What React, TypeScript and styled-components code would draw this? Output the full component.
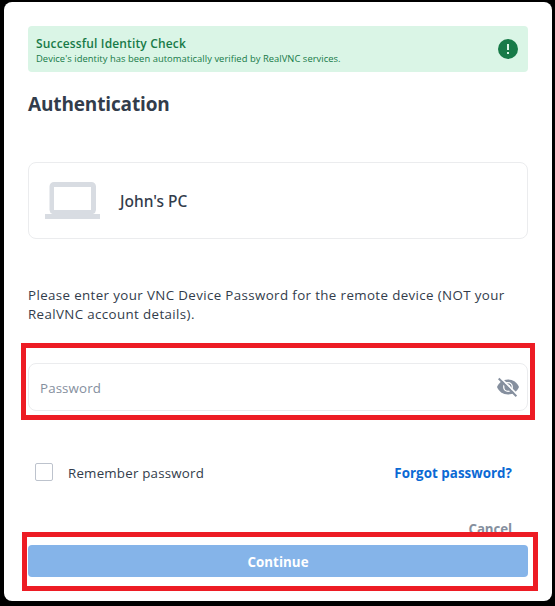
import React from 'react';
import styled, { createGlobalStyle } from 'styled-components';

const GlobalStyle = createGlobalStyle`
  * { box-sizing: border-box; }
  body {
    margin: 0;
    background: #000;
    color: #323c4b;
    font-family: "Open Sans", "Noto Sans", sans-serif;
  }
`;

const Dialog = styled.main`
  width: 548px;
  height: 599px;
  margin: 2px 0 0 4px;
  padding: 24px 24px 0;
  display: flex;
  flex-direction: column;
  background: #fff;
  border-radius: 8px;
`;

const Banner = styled.section`
  height: 46px;
  flex: none;
  padding: 0 10px 0 8px;
  display: flex;
  align-items: center;
  justify-content: space-between;
  border-radius: 4px;
  background: #daf5e6;
  color: #177a48;
`;

const BannerTitle = styled.div`
  margin-top: 4px;
  font-size: 12px;
  line-height: 15px;
  font-weight: 600;
  letter-spacing: 0.15px;
`;

const BannerText = styled.div`
  font-size: 9.4px;
  line-height: 15px;
  letter-spacing: 0.045px;
`;

const Heading = styled.h1`
  margin: 18px 0 0;
  font-size: 19px;
  line-height: 28px;
  font-weight: 700;
  letter-spacing: -0.14px;
`;

const DeviceCard = styled.section`
  height: 77px;
  flex: none;
  margin-top: 44px;
  padding-left: 16px;
  display: flex;
  align-items: center;
  gap: 20px;
  border: 1px solid #ebecee;
  border-radius: 8px;
`;

const DeviceName = styled.div`
  font-family: "Noto Sans", sans-serif;
  font-size: 15.5px;
  line-height: 20px;
  font-weight: 500;
`;

const Prompt = styled.p`
  height: 38px;
  margin: 47px 0 0;
  font-size: 13.33px;
  line-height: 19px;
  letter-spacing: 0.375px;
  white-space: nowrap;
`;

const Highlight = styled.div<{ $kind: 'field' | 'button' }>`
  flex: none;
  position: relative;
  border: 5px solid #ed1c24;
  ${({ $kind }) =>
    $kind === 'field'
      ? 'margin: 19px -7px 0; height: 77px; padding: 15px 2px 0;'
      : 'margin: -7px -10px 0 -6px; height: 59px; padding: 8px 5px 0 1px; background: #fff;'}
`;

const PasswordField = styled.div`
  height: 48px;
  padding: 0 7px 0 11px;
  display: flex;
  align-items: center;
  border: 1px solid #ebecee;
  border-radius: 8px;
`;

const PasswordInput = styled.input`
  flex: 1;
  min-width: 0;
  padding: 2px 0 0;
  border: 0;
  outline: 0;
  background: transparent;
  font: 400 13.33px/20px "Open Sans", sans-serif;
  letter-spacing: 0.11px;
  &::placeholder { color: #858f9e; opacity: 1; }
`;

const IconButton = styled.button`
  width: 24px;
  height: 24px;
  padding: 0;
  border: 0;
  background: none;
  color: #858f9e;
  svg { display: block; }
`;

const Options = styled.div`
  height: 24px;
  margin-top: 40px;
  padding: 0 16px 0 7px;
  display: flex;
  align-items: center;
  justify-content: space-between;
`;

const RememberLabel = styled.label`
  display: flex;
  align-items: center;
  gap: 15px;
  font-size: 13.33px;
  line-height: 20px;
  letter-spacing: 0.2px;
`;

const Checkbox = styled.input`
  appearance: none;
  width: 18px;
  height: 18px;
  margin: 0;
  border: 1px solid #bdc3cd;
  border-radius: 2px;
  background: #fff;
`;

const LabelText = styled.span`
  padding-top: 2px;
`;

const ForgotLink = styled.a`
  padding-top: 2px;
  color: #0b69d4;
  font-size: 13.33px;
  line-height: 20px;
  font-weight: 700;
  letter-spacing: 0.05px;
  text-decoration: none;
`;

const CancelButton = styled.button`
  align-self: flex-end;
  height: 20px;
  margin: 35px 16px 0 0;
  padding: 0;
  border: 0;
  background: none;
  color: #858f9e;
  font: 700 13.33px/20px "Open Sans", sans-serif;
  letter-spacing: -0.1px;
`;

const ContinueButton = styled.button`
  width: 100%;
  height: 32px;
  padding: 2px 0 0;
  display: block;
  border: 0;
  border-radius: 4px;
  background: #85b4e9;
  color: #fff;
  font: 700 13.33px/20px "Open Sans", sans-serif;
  letter-spacing: 0.06px;
`;

const AlertIcon = () => (
  <svg width="20" height="20" viewBox="0 0 20 20" aria-hidden="true">
    <circle cx="10" cy="10" r="10" fill="#177a48" />
    <path d="M9 5h2v6H9zM9 13h2v2H9z" fill="#daf5e6" />
  </svg>
);

const LaptopIcon = () => (
  <svg width="55" height="37" viewBox="0 0 55 37" fill="#d8dce2" aria-hidden="true">
    <path
      fillRule="evenodd"
      d="M9 0h37.500a4.500 4.500 0 0 1 4.500 4.500V28a4.500 4.500 0 0 1-3 4h7v5H0v-5h7.500a4.500 4.500 0 0 1-3-4V4.500A4.500 4.500 0 0 1 9 0zm0 5v23h37V5z"
    />
  </svg>
);

const EyeOffIcon = () => (
  <svg width="24" height="24" viewBox="0 0 24 24" fill="none" aria-hidden="true">
    <path
      d="M12 4.500C7 4.500 2.700 7.600 1 12c1.700 4.400 6 7.500 11 7.500s9.300-3.100 11-7.500c-1.700-4.400-6-7.500-11-7.500z"
      fill="currentColor"
    />
    <circle cx="12" cy="12" r="4.300" stroke="#fff" strokeWidth="1.300" />
    <path d="M12.300 10.200a1.800 1.800 0 0 1 1.500 1.500" stroke="#fff" strokeWidth="1.200" />
    <path d="M3.900 2.100 21.900 20.100" stroke="#fff" strokeWidth="1.800" />
    <path d="M2.700 3.500 20.400 21.300" stroke="currentColor" strokeWidth="2" />
  </svg>
);

export default function App() {
  return (
    <>
      <GlobalStyle />
      <Dialog>
        <Banner>
          <div>
            <BannerTitle>Successful Identity Check</BannerTitle>
            <BannerText>Device's identity has been automatically verified by RealVNC services.</BannerText>
          </div>
          <AlertIcon />
        </Banner>
        <Heading>Authentication</Heading>
        <DeviceCard>
          <LaptopIcon />
          <DeviceName>John's PC</DeviceName>
        </DeviceCard>
        <Prompt>
          Please enter your VNC Device Password for the remote device (NOT your
          <br />
          RealVNC account details).
        </Prompt>
        <Highlight $kind="field">
          <PasswordField>
            <PasswordInput type="password" placeholder="Password" />
            <IconButton type="button" aria-label="Show password">
              <EyeOffIcon />
            </IconButton>
          </PasswordField>
        </Highlight>
        <Options>
          <RememberLabel>
            <Checkbox type="checkbox" />
            <LabelText>Remember password</LabelText>
          </RememberLabel>
          <ForgotLink href="#">Forgot password?</ForgotLink>
        </Options>
        <CancelButton type="button">Cancel</CancelButton>
        <Highlight $kind="button">
          <ContinueButton type="button">Continue</ContinueButton>
        </Highlight>
      </Dialog>
    </>
  );
}
